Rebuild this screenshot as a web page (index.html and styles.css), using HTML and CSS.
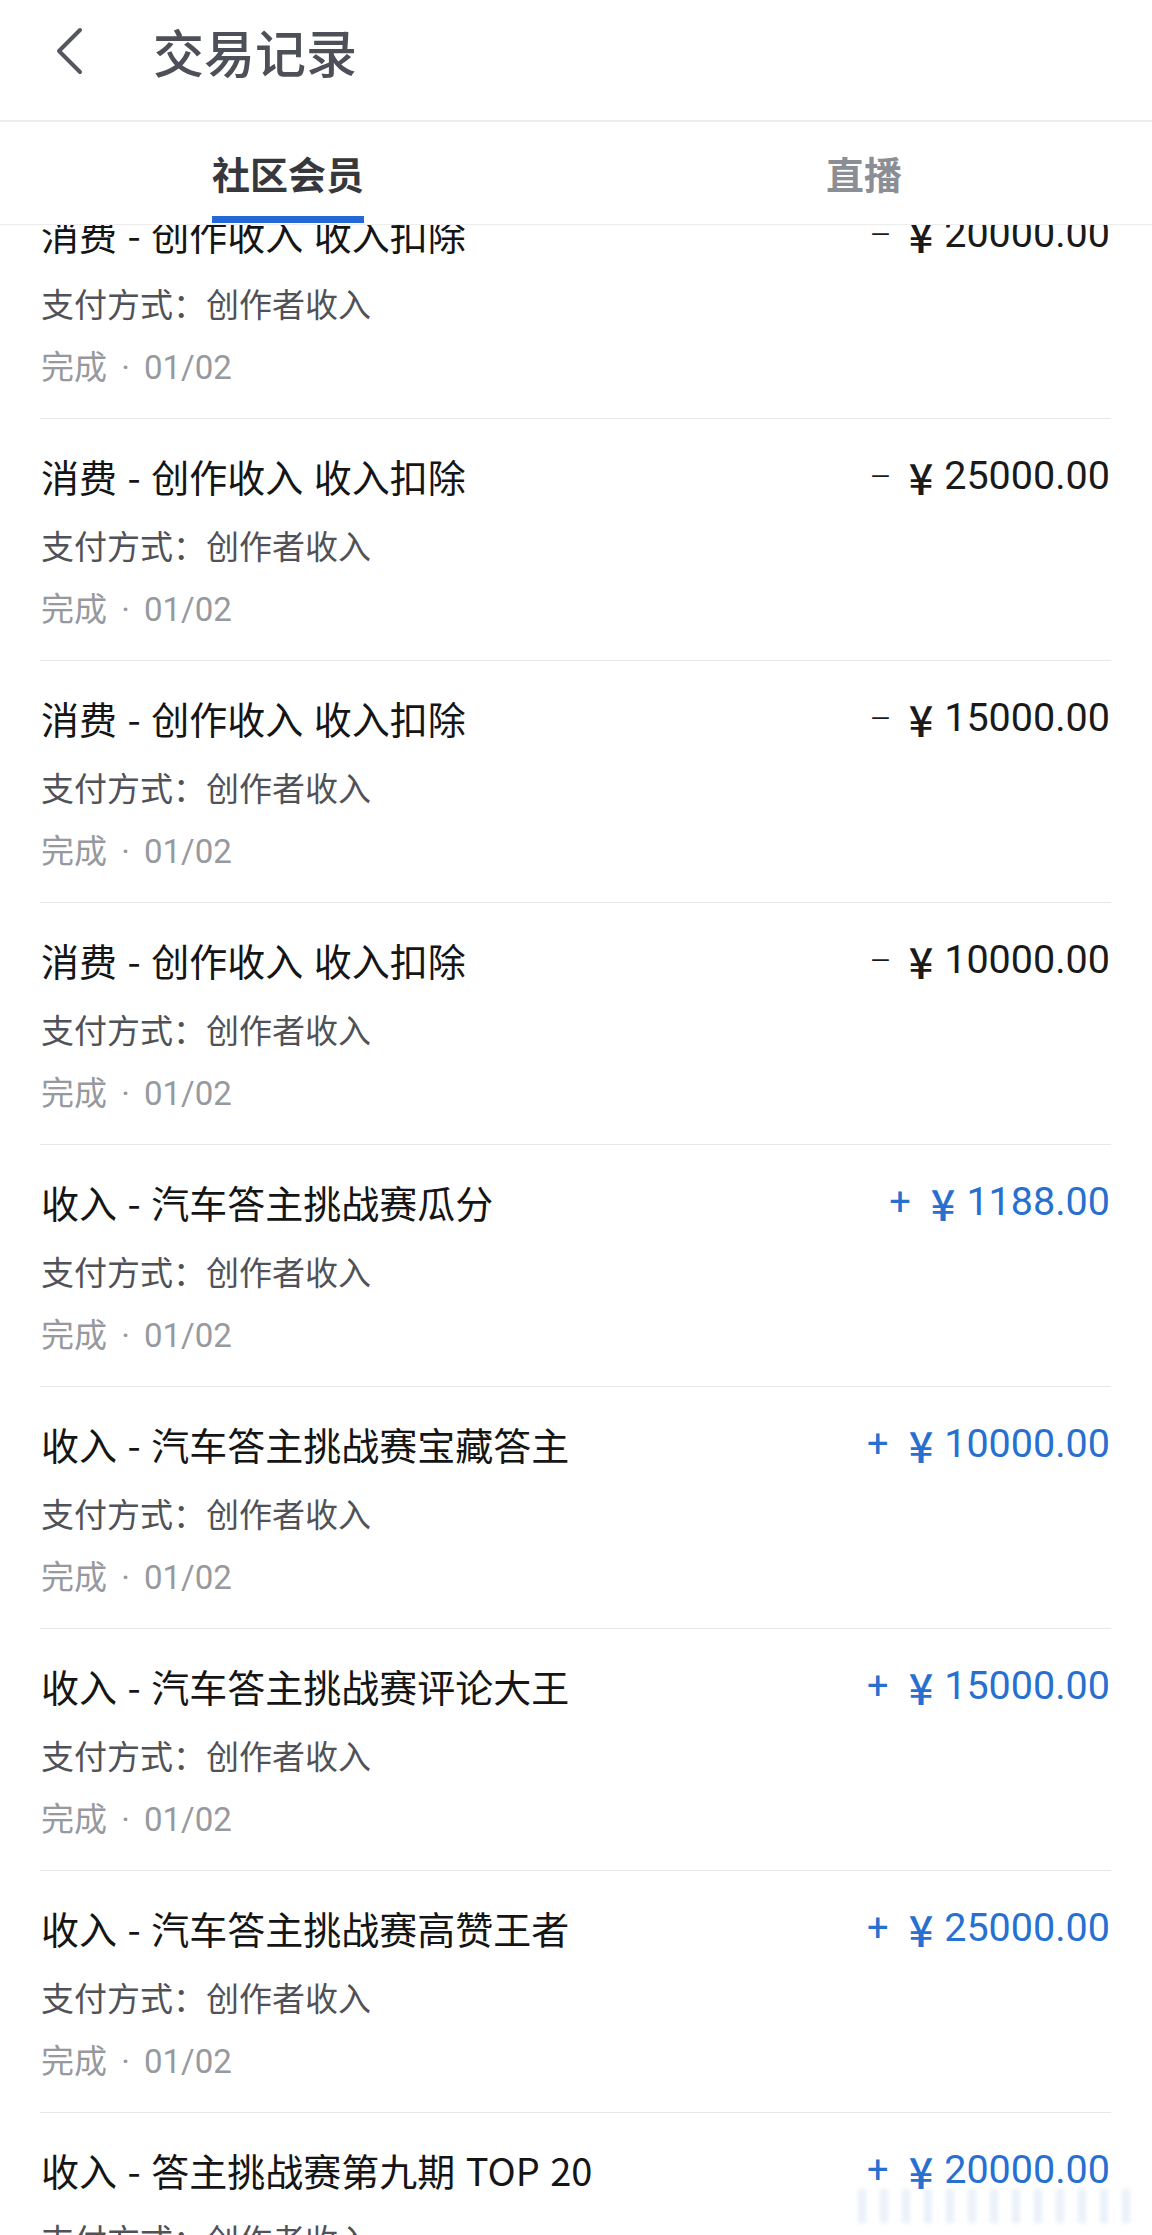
FILE: index.html
```html
<!DOCTYPE html>
<html lang="zh-CN">
<head>
<meta charset="utf-8">
<title>交易记录</title>
<link rel="stylesheet" href="styles.css">
</head>
<body>
<div class="page">
  <header class="topbar">
    <svg class="back" width="30" height="48" viewBox="0 0 30 48"><path d="M26 3 L5 24 L26 45" fill="none" stroke="#54575d" stroke-width="4" stroke-linecap="round" stroke-linejoin="round"/></svg>
    <h1 class="title">交易记录</h1>
  </header>
  <nav class="tabs">
    <div class="tab active"><span class="tab-label">社区会员</span></div>
    <div class="tab"><span class="tab-label">直播</span></div>
  </nav>
  <main class="list">
    <div class="list-inner">
      <div class="row"><div class="line"><span class="name">消费 - 创作收入 收入扣除</span><span class="amount"><span class="sign minus">–</span><span class="yen">¥</span><span class="num">20000.00</span></span></div><div class="pay">支付方式：创作者收入</div><div class="date">完成 · 01/02</div></div>
      <div class="row"><div class="line"><span class="name">消费 - 创作收入 收入扣除</span><span class="amount"><span class="sign minus">–</span><span class="yen">¥</span><span class="num">25000.00</span></span></div><div class="pay">支付方式：创作者收入</div><div class="date">完成 · 01/02</div></div>
      <div class="row"><div class="line"><span class="name">消费 - 创作收入 收入扣除</span><span class="amount"><span class="sign minus">–</span><span class="yen">¥</span><span class="num">15000.00</span></span></div><div class="pay">支付方式：创作者收入</div><div class="date">完成 · 01/02</div></div>
      <div class="row"><div class="line"><span class="name">消费 - 创作收入 收入扣除</span><span class="amount"><span class="sign minus">–</span><span class="yen">¥</span><span class="num">10000.00</span></span></div><div class="pay">支付方式：创作者收入</div><div class="date">完成 · 01/02</div></div>
      <div class="row"><div class="line"><span class="name">收入 - 汽车答主挑战赛瓜分</span><span class="amount plus"><span class="sign">+</span><span class="yen">¥</span><span class="num">1188.00</span></span></div><div class="pay">支付方式：创作者收入</div><div class="date">完成 · 01/02</div></div>
      <div class="row"><div class="line"><span class="name">收入 - 汽车答主挑战赛宝藏答主</span><span class="amount plus"><span class="sign">+</span><span class="yen">¥</span><span class="num">10000.00</span></span></div><div class="pay">支付方式：创作者收入</div><div class="date">完成 · 01/02</div></div>
      <div class="row"><div class="line"><span class="name">收入 - 汽车答主挑战赛评论大王</span><span class="amount plus"><span class="sign">+</span><span class="yen">¥</span><span class="num">15000.00</span></span></div><div class="pay">支付方式：创作者收入</div><div class="date">完成 · 01/02</div></div>
      <div class="row"><div class="line"><span class="name">收入 - 汽车答主挑战赛高赞王者</span><span class="amount plus"><span class="sign">+</span><span class="yen">¥</span><span class="num">25000.00</span></span></div><div class="pay">支付方式：创作者收入</div><div class="date">完成 · 01/02</div></div>
      <div class="row"><div class="line"><span class="name">收入 - 答主挑战赛第九期 TOP 20</span><span class="amount plus"><span class="sign">+</span><span class="yen">¥</span><span class="num">20000.00</span></span></div><div class="pay">支付方式：创作者收入</div><div class="date">完成 · 01/02</div></div>
    </div>
    <div class="watermark"></div>
  </main>
</div>
</body>
</html>
```

FILE: styles.css
```css
* { box-sizing: border-box; }
html, body {
  margin: 0;
  padding: 0;
  background: #ffffff;
}
body {
  width: 1152px;
  height: 2235px;
  overflow: hidden;
  font-family: Roboto, "Noto Sans CJK SC", sans-serif;
  color: #1c1c1e;
}
.page {
  display: flex;
  flex-direction: column;
  height: 2235px;
}
.topbar {
  height: 122px;
  flex: none;
  display: flex;
  align-items: flex-start;
  padding-left: 54px;
  padding-top: 21px;
  border-bottom: 2px solid #ececec;
}
.back {
  flex: none;
  display: block;
  margin-top: 6px;
}
.title {
  margin: 0 0 0 69px;
  font-family: "Noto Sans CJK SC", sans-serif;
  font-size: 51px;
  font-weight: 500;
  line-height: 60px;
  color: #4d5058;
}
.tabs {
  flex: none;
  height: 103px;
  display: grid;
  grid-template-columns: 1fr 1fr;
  border-bottom: 1px solid #ededed;
}
.tab {
  display: flex;
  justify-content: center;
  padding-top: 25px;
}
.tab-label {
  display: inline-flex;
  flex-direction: column;
  align-items: stretch;
  font-family: "Noto Sans CJK SC", sans-serif;
  font-size: 38px;
  font-weight: 700;
  line-height: 52px;
  color: #8b8e94;
}
.tab.active .tab-label { color: #36383d; }
.tab.active .tab-label::after {
  content: "";
  display: block;
  height: 7px;
  margin-top: 17px;
  background: #2468d8;
}
.list {
  flex: 1;
  overflow: hidden;
  position: relative;
}
.list-inner {
  margin-top: -48px;
}
.row {
  margin: 0 41px 0 40px;
  padding: 31px 0 27px;
  border-bottom: 1px solid #e8e8e8;
}
.line {
  display: flex;
  justify-content: space-between;
  align-items: center;
  height: 52px;
}
.name {
  font-family: "Noto Sans CJK SC", sans-serif;
  font-size: 38px;
  line-height: 52px;
  word-spacing: 2px;
  color: #151515;
  margin-left: 1px;
}
.amount {
  display: flex;
  align-items: center;
  color: #1a1a1a;
  line-height: 52px;
  margin-right: 1px;
}
.amount.plus { color: #2870cf; }
.sign {
  font-family: Roboto, sans-serif;
  font-size: 38px;
  margin-right: 20px;
}
.sign.minus {
  font-size: 34px;
  font-weight: 300;
  margin-right: 17px;
}
.yen {
  font-family: "Noto Sans CJK SC", sans-serif;
  font-weight: 500;
  font-size: 43px;
  margin-right: 11px;
}
.num {
  font-family: Roboto, sans-serif;
  font-size: 39.5px;
}
.pay {
  margin-top: 20px;
  font-family: "Noto Sans CJK SC", sans-serif;
  font-size: 33px;
  line-height: 46px;
  color: #505257;
  margin-left: 1px;
}
.date {
  margin-top: 19px;
  font-family: Roboto, "Noto Sans CJK SC", sans-serif;
  font-size: 33px;
  line-height: 46px;
  word-spacing: 6px;
  color: #97999e;
  margin-left: 1px;
}
.watermark {
  position: absolute;
  right: 8px;
  bottom: 12px;
  width: 300px;
  height: 34px;
  background: repeating-linear-gradient(90deg, rgba(200,215,235,0) 0px, rgba(200,215,235,0) 14px, rgba(200,218,238,0.55) 14px, rgba(200,218,238,0.55) 22px);
  filter: blur(2px);
  opacity: 0.7;
}
```
